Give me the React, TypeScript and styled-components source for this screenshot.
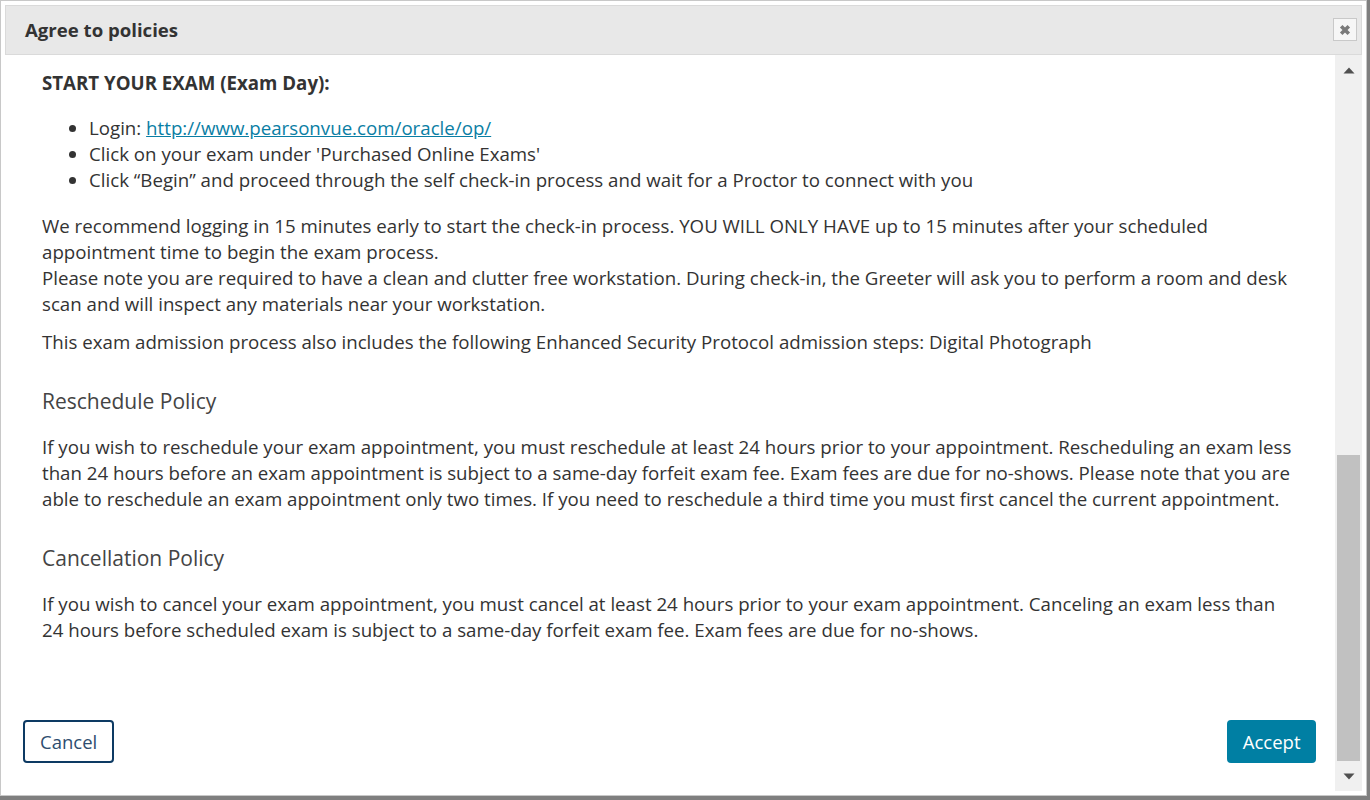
import React from "react";
import styled, { createGlobalStyle } from "styled-components";

const Global = createGlobalStyle`
  html, body { margin: 0; padding: 0; background: #7f7f7f; }
  body { font-family: "Open Sans", "Noto Sans", sans-serif; color: #333; }
  * { box-sizing: border-box; }
`;

const Dialog = styled.div`
  width: 1367px;
  height: 796px;
  background: #fff;
  border: 1px solid #c8c8c8;
  padding: 4px;
  display: flex;
  flex-direction: column;
`;

const Header = styled.div`
  height: 50px;
  flex: none;
  background: #e8e8e8;
  border: 1px solid #dadada;
  display: flex;
  align-items: center;
  justify-content: space-between;
  padding: 0 4px 1px 19px;
`;

const Title = styled.h1`
  margin: 0;
  font-size: 18.6px;
  font-weight: 700;
  color: #333;
`;

const CloseButton = styled.button`
  width: 24px;
  height: 23px;
  padding: 0;
  border: 1px solid #c9c9c9;
  background: #f6f6f6;
  display: flex;
  align-items: center;
  justify-content: center;
  cursor: pointer;
`;

const Body = styled.div`
  flex: 1;
  min-height: 0;
  display: flex;
`;

const Main = styled.div`
  flex: 1;
  min-width: 0;
  display: flex;
  flex-direction: column;
`;

const Content = styled.div`
  flex: 1;
  overflow: hidden;
  padding: 15px 43px 0 37px;
  font-size: 18.7px;
  line-height: 26px;
`;

const Strong = styled.div`
  font-weight: 700;
`;

const List = styled.ul`
  margin: 19px 0 20px;
  padding-left: 47px;
  li { line-height: 26px; }
`;

const Link = styled.a`
  color: #0a7ea4;
  text-decoration: underline;
`;

const Para = styled.p<{ $gap?: number }>`
  margin: 0 0 ${(p) => p.$gap ?? 12}px;
`;

const Heading = styled.h2`
  margin: 31px 0 18px;
  font-size: 21px;
  line-height: 30px;
  font-weight: 400;
  color: #444;
`;

const Footer = styled.div`
  flex: none;
  height: 84px;
  padding: 13px 19px 0 18px;
  display: flex;
  justify-content: space-between;
  align-items: flex-start;
`;

const Button = styled.button<{ $primary?: boolean }>`
  height: 43px;
  font-family: inherit;
  font-size: 18.5px;
  border-radius: 4px;
  cursor: pointer;
  padding: ${(p) => (p.$primary ? "0 13.5px" : "0 15px")};
  border: 2px solid ${(p) => (p.$primary ? "#007fa3" : "#0d3a63")};
  background: ${(p) => (p.$primary ? "#007fa3" : "#fff")};
  color: ${(p) => (p.$primary ? "#fff" : "#2e4d6f")};
`;

const Scrollbar = styled.div`
  width: 27px;
  flex: none;
  background: #f0f0f0;
  display: flex;
  flex-direction: column;
  align-items: center;
`;

const ArrowBox = styled.div`
  height: 30px;
  flex: none;
  display: flex;
  align-items: center;
  justify-content: center;
  width: 100%;
`;

const Track = styled.div`
  flex: 1;
  width: 100%;
  display: flex;
  flex-direction: column;
  justify-content: flex-end;
  padding: 0 2px;
`;

const Thumb = styled.div`
  height: 306px;
  background: #c1c1c1;
`;

const Arrow = ({ down }: { down?: boolean }) => (
  <svg width="12" height="7" viewBox="0 0 12 7">
    <polygon points={down ? "0.5,0.5 11.5,0.5 6,6.5" : "0.5,6.5 11.5,6.5 6,0.5"} fill="#505050" />
  </svg>
);

export default function App() {
  return (
    <>
      <Global />
      <Dialog>
        <Header>
          <Title>Agree to policies</Title>
          <CloseButton aria-label="Close">
            <svg width="12" height="12" viewBox="0 0 12 12">
              <path d="M2.2 2.2 L9.8 9.8 M9.8 2.2 L2.2 9.8" stroke="#7a7a7a" strokeWidth="3.6" />
            </svg>
          </CloseButton>
        </Header>
        <Body>
          <Main>
            <Content>
              <Strong>START YOUR EXAM (Exam Day):</Strong>
              <List>
                <li>
                  Login: <Link href="#">http://www.pearsonvue.com/oracle/op/</Link>
                </li>
                <li>Click on your exam under 'Purchased Online Exams'</li>
                <li>Click “Begin” and proceed through the self check-in process and wait for a Proctor to connect with you</li>
              </List>
              <Para>
                We recommend logging in 15 minutes early to start the check-in process. YOU WILL ONLY HAVE up to 15 minutes after your scheduled appointment time to begin the exam process.
                <br />
                Please note you are required to have a clean and clutter free workstation. During check-in, the Greeter will ask you to perform a room and desk scan and will inspect any materials near your workstation.
              </Para>
              <Para $gap={0}>
                This exam admission process also includes the following Enhanced Security Protocol admission steps: Digital Photograph
              </Para>
              <Heading>Reschedule Policy</Heading>
              <Para $gap={0}>
                If you wish to reschedule your exam appointment, you must reschedule at least 24 hours prior to your appointment. Rescheduling an exam less than 24 hours before an exam appointment is subject to a same-day forfeit exam fee. Exam fees are due for no-shows. Please note that you are able to reschedule an exam appointment only two times. If you need to reschedule a third time you must first cancel the current appointment.
              </Para>
              <Heading>Cancellation Policy</Heading>
              <Para $gap={0}>
                If you wish to cancel your exam appointment, you must cancel at least 24 hours prior to your exam appointment. Canceling an exam less than 24 hours before scheduled exam is subject to a same-day forfeit exam fee. Exam fees are due for no-shows.
              </Para>
            </Content>
            <Footer>
              <Button>Cancel</Button>
              <Button $primary>Accept</Button>
            </Footer>
          </Main>
          <Scrollbar>
            <ArrowBox>
              <Arrow />
            </ArrowBox>
            <Track>
              <Thumb />
            </Track>
            <ArrowBox>
              <Arrow down />
            </ArrowBox>
          </Scrollbar>
        </Body>
      </Dialog>
    </>
  );
}
